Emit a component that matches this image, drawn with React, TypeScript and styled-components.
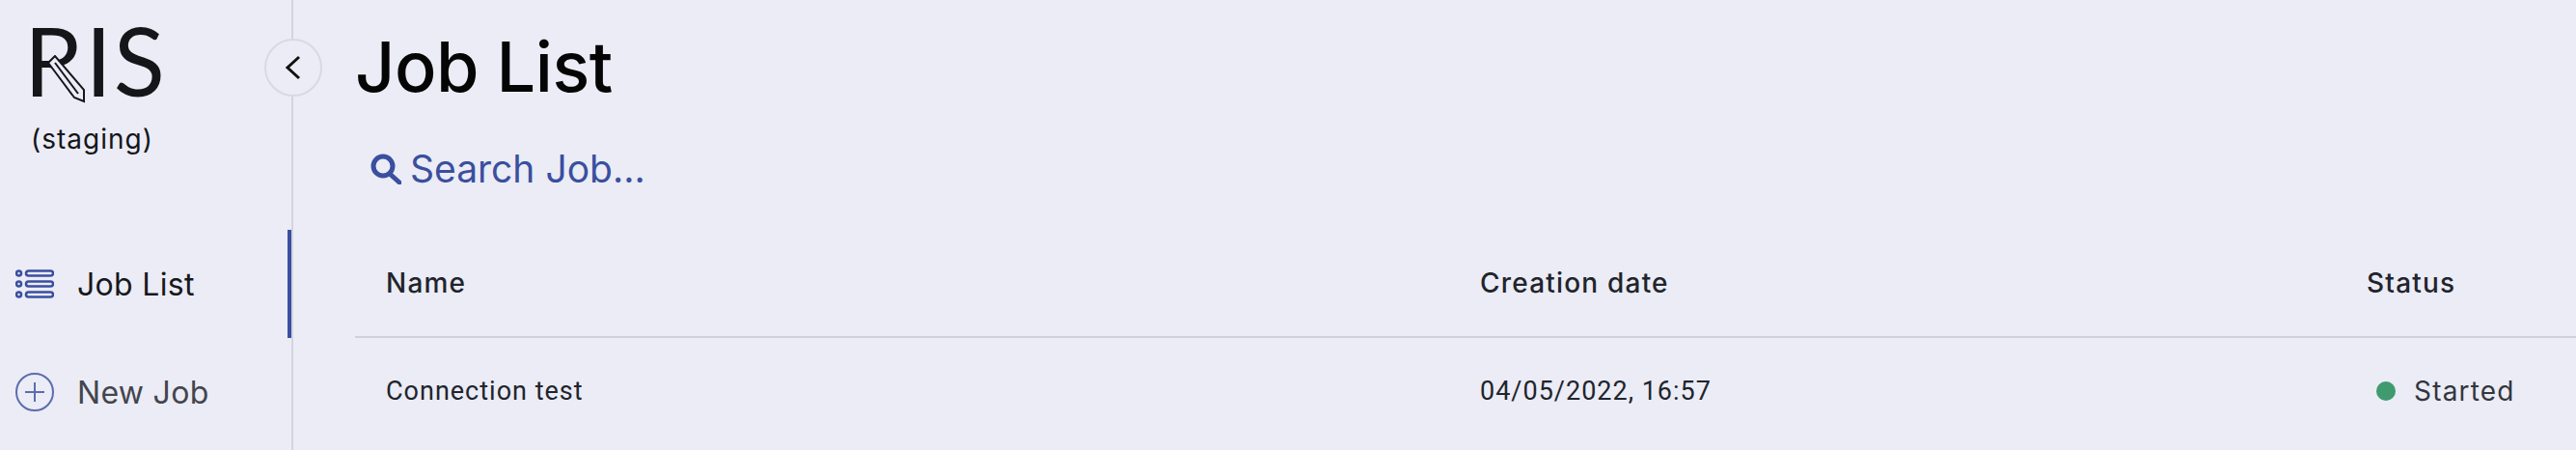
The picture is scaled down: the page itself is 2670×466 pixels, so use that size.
import React from "react";
import styled, { createGlobalStyle } from "styled-components";

const Global = createGlobalStyle`
  html, body { margin: 0; padding: 0; background: #ebecf5; }
  body { width: 2670px; height: 466px; overflow: hidden; }
`;

const Page = styled.div`
  display: flex;
  width: 2670px;
  height: 466px;
  overflow: hidden;
  background: #ebecf5;
  color: #21242c;
`;

const Sidebar = styled.aside`
  position: relative;
  box-sizing: border-box;
  flex: 0 0 304px;
  height: 466px;
  display: flex;
  flex-direction: column;
  border-right: 2px solid #d2d5e0;
`;

const LogoBlock = styled.div`
  height: 238px;
  box-sizing: border-box;
  padding: 16px 0 0 25px;
`;

const LogoMark = styled.div`
  position: relative;
  width: 150px;
  height: 92px;
`;

const LogoText = styled.span`
  font-family: "Lato", sans-serif;
  font-weight: 400;
  font-size: 98px;
  line-height: 92px;
  letter-spacing: 2px;
  color: #15161a;
`;

const Pencil = styled.svg`
  position: absolute;
  left: 24px;
  top: 41px;
`;

const Env = styled.div`
  margin: 19px 0 0 7px;
  font-family: "Inter", sans-serif;
  font-size: 28px;
  line-height: 34px;
  letter-spacing: 1px;
  color: #15161a;
`;

const NavItem = styled.div<{ $active?: boolean }>`
  box-sizing: border-box;
  height: 112px;
  display: flex;
  align-items: center;
  gap: 24px;
  padding-left: 16px;
  font-family: "Inter", sans-serif;
  font-size: 32px;
  letter-spacing: 0.3px;
  color: ${(p) => (p.$active ? "#17181d" : "#43454d")};
  border-right: 4px solid ${(p) => (p.$active ? "#3a4f9f" : "transparent")};
`;

const Collapse = styled.button`
  position: absolute;
  left: 274px;
  top: 40px;
  box-sizing: border-box;
  width: 60px;
  height: 60px;
  padding: 0;
  border-radius: 50%;
  border: 2px solid #d8dae3;
  background: #ebecf5;
  display: flex;
  align-items: center;
  justify-content: center;
`;

const Main = styled.main`
  flex: 1;
  min-width: 0;
  box-sizing: border-box;
  padding-left: 64px;
  display: flex;
  flex-direction: column;
`;

const Title = styled.h1`
  margin: 0;
  height: 140px;
  box-sizing: border-box;
  padding-top: 27px;
  font-family: "Inter", sans-serif;
  font-weight: 500;
  font-size: 72px;
  line-height: 84px;
  letter-spacing: -0.5px;
  color: #050505;
`;

const Search = styled.div`
  height: 98px;
  box-sizing: border-box;
  padding: 11px 0 0 16px;
  display: flex;
  align-items: flex-start;
  gap: 9px;
  color: #3a4f9f;
  font-family: "Inter", sans-serif;
  font-size: 39px;
  line-height: 48px;
`;

const Row = styled.div<{ $head?: boolean }>`
  display: grid;
  grid-template-columns: 1134px 919px 1fr;
  align-items: center;
  height: ${(p) => (p.$head ? "112px" : "110px")};
  box-sizing: border-box;
  padding-left: 32px;
  border-bottom: ${(p) => (p.$head ? "2px solid #d0d1de" : "none")};
`;

const HeadCell = styled.div`
  font-family: "Inter", sans-serif;
  font-weight: 500;
  font-size: 28px;
  letter-spacing: 1.2px;
  color: #21242c;
`;

const Cell = styled.div`
  font-family: "Roboto", sans-serif;
  font-size: 27px;
  letter-spacing: 1px;
  color: #21242c;
`;

const Status = styled.div`
  display: flex;
  align-items: center;
  gap: 19px;
  padding-left: 10px;
  font-family: "Inter", sans-serif;
  font-size: 28px;
  letter-spacing: 1.2px;
  color: #33363e;
`;

const Dot = styled.span`
  width: 20px;
  height: 20px;
  border-radius: 50%;
  background: #3f9a6e;
`;

export default function App() {
  return (
    <Page>
      <Global />
      <Sidebar>
        <LogoBlock>
          <LogoMark>
            <LogoText>RIS</LogoText>
            <Pencil width="40" height="50" viewBox="0 0 40 50" fill="none">
              <path d="M1 8 L8 1 L38 36 L38 48 L28 44 Z" fill="#ebecf5" stroke="#15161a" strokeWidth="2" />
              <path d="M8 8 L32 40" stroke="#15161a" strokeWidth="2" />
            </Pencil>
          </LogoMark>
          <Env>(staging)</Env>
        </LogoBlock>
        <NavItem $active>
          <svg width="40" height="32" viewBox="0 0 40 32" fill="none" stroke="#3a4f9f" strokeWidth="2.6">
            <circle cx="3.5" cy="5" r="2.5" />
            <circle cx="3.5" cy="16" r="2.5" />
            <circle cx="3.5" cy="27" r="2.5" />
            <rect x="11" y="2.5" width="28" height="5" rx="2.5" />
            <rect x="11" y="13.5" width="28" height="5" rx="2.5" />
            <rect x="11" y="24.5" width="28" height="5" rx="2.5" />
          </svg>
          <span>Job List</span>
        </NavItem>
        <NavItem>
          <svg width="40" height="40" viewBox="0 0 40 40" fill="none" stroke="#5d6cae" strokeWidth="2">
            <circle cx="20" cy="20" r="19" />
            <path d="M20 10V30M10 20H30" />
          </svg>
          <span>New Job</span>
        </NavItem>
        <Collapse>
          <svg width="18" height="26" viewBox="0 0 18 26" fill="none" stroke="#111" strokeWidth="3">
            <path d="M15 2 L3 13 L15 24" />
          </svg>
        </Collapse>
      </Sidebar>
      <Main>
        <Title>Job List</Title>
        <Search>
          <svg width="32" height="32" viewBox="0 0 32 32" fill="none" stroke="#3a4f9f" style={{ marginTop: 8 }}>
            <circle cx="13" cy="13" r="10" strokeWidth="5" />
            <path d="M20 21 L30 30" strokeWidth="5" strokeLinecap="round" />
          </svg>
          <span>Search Job...</span>
        </Search>
        <Row $head>
          <HeadCell>Name</HeadCell>
          <HeadCell>Creation date</HeadCell>
          <HeadCell>Status</HeadCell>
        </Row>
        <Row>
          <Cell>Connection test</Cell>
          <Cell>04/05/2022, 16:57</Cell>
          <Status>
            <Dot />
            <span>Started</span>
          </Status>
        </Row>
      </Main>
    </Page>
  );
}
